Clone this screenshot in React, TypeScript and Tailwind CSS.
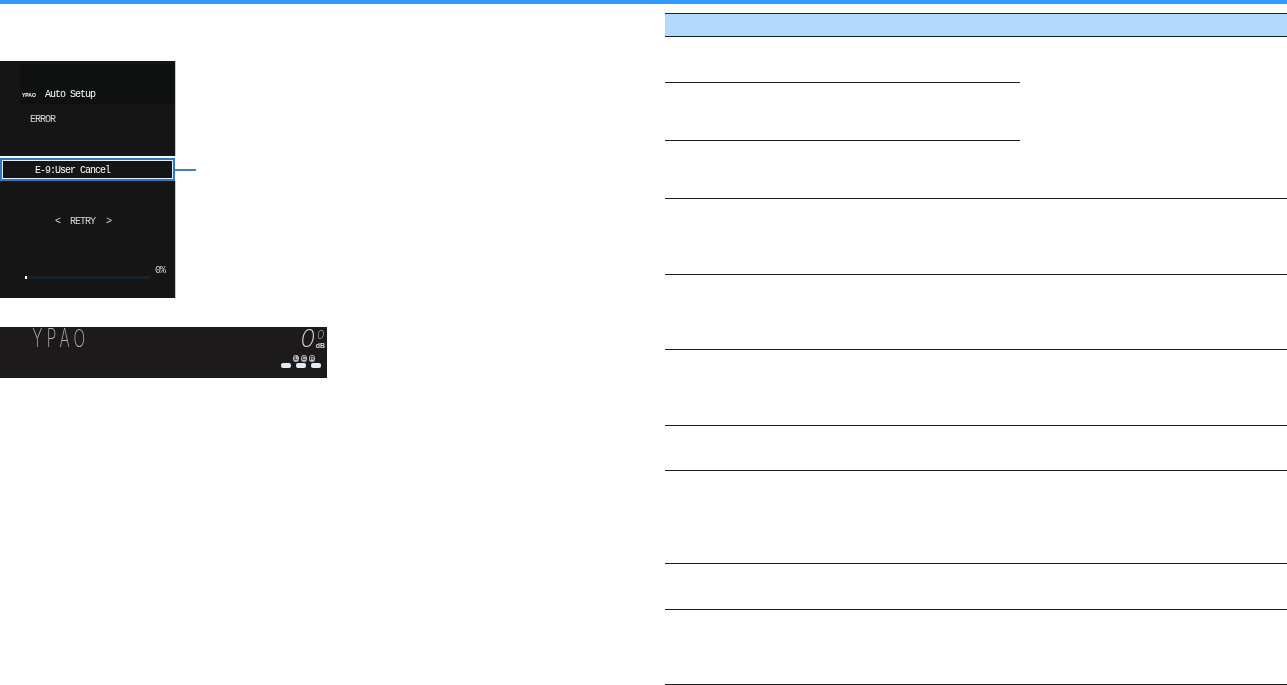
const sans = { fontFamily: '"Liberation Sans", sans-serif' };
const inter = { fontFamily: 'Inter, sans-serif' };

function Screen() {
  return (
    <div className="flex flex-col w-[199px] text-[10px] leading-[12px] tracking-[-1px] text-[#d4d4d4] [will-change:transform]">
      <div className="w-[176px] h-[95px] bg-[#151515] border-r border-[#c8c8c8] pt-[3px] flex flex-col">
        <div className="ml-[20px] h-[40px] bg-[#0f1110] flex items-end gap-[6px] pl-[2px] pb-[3px] text-white">
          <span className="w-[17px] text-[5px] font-bold tracking-normal" style={sans}>YPAO</span>
          <span>Auto Setup</span>
        </div>
        <div className="mt-[10px] ml-[30px]">ERROR</div>
      </div>
      <div className="flex items-center mt-[2px]">
        <div className="w-[175px] h-[23px] border-2 border-[#2f78c4] shrink-0">
          <div className="h-full border border-[#e8eef5] bg-[#151515] flex items-center pl-[32px] pt-[2px] text-white">E-9:User Cancel</div>
        </div>
        <div className="w-[21px] h-[2px] bg-[#3f7fc4]" />
      </div>
      <div className="w-[176px] h-[117px] bg-[#151515] border-r border-[#c8c8c8] pt-[35px] flex flex-col">
        <div className="flex pl-[55px]">
          <span className="w-[5px]">&lt;</span>
          <span className="ml-[10px] w-[25px]">RETRY</span>
          <span className="ml-[11px] w-[5px]">&gt;</span>
        </div>
        <div className="mt-[37px] pl-[155px]">0%</div>
        <div className="-mt-px ml-[25px] w-[125px] h-[3px] bg-[#15232f] flex">
          <div className="w-[2px] bg-white" />
        </div>
      </div>
    </div>
  );
}

function Display() {
  return (
    <div className="w-[327px] h-[51px] mt-[29px] bg-[#1c1a1b] flex justify-between [will-change:transform]">
      <div className="pl-[52px] text-[25px] leading-[23px] font-extralight tracking-[7px] text-[#b4b4b4] origin-left scale-x-[0.62] whitespace-nowrap" style={inter}>YPAO</div>
      <div className="flex flex-col items-end pr-[3px] pt-[2px]" style={sans}>
        <div className="flex h-[26px]">
          <span className="text-[24px] leading-[19px] font-extralight italic text-[#dcdcdc]" style={inter}>0</span>
          <div className="flex flex-col items-center ml-[2px] w-[7px]">
            <span className="text-[12px] leading-[12px] font-extralight italic text-[#c4c4c4]" style={inter}>0</span>
            <span className="mt-[2px] text-[7px] leading-[6px] font-bold text-[#d8d8d8]">dB</span>
          </div>
        </div>
        <div className="flex gap-[2px] mr-[9px]">
          {["L", "C", "R"].map((c) => (
            <div key={c} className="w-[6px] h-[7px] rounded-full bg-[#b4b4b4] text-[#222] text-[6px] leading-[7px] text-center font-bold">{c}</div>
          ))}
        </div>
        <div className="flex gap-[5px] mr-[3px] mt-[1px]">
          {[0, 1, 2].map((i) => (
            <div key={i} className="w-[10px] h-[5px] rounded-[2px] bg-[#e2ebf4]" />
          ))}
        </div>
      </div>
    </div>
  );
}

export default function App() {
  const rows = [
    { h: 46, short: true },
    { h: 58, short: true },
    { h: 58, short: false },
    { h: 76, short: false },
    { h: 75, short: false },
    { h: 76, short: false },
    { h: 45, short: false },
    { h: 93, short: false },
    { h: 46, short: false },
    { h: 75, short: false },
  ];
  return (
    <div className="w-[1287px] h-[685px] bg-white overflow-hidden" style={{ fontFamily: '"Liberation Mono", monospace' }}>
      <div className="h-[4px] bg-[#3399ff]" />
      <div className="flex">
        <div className="w-[665px] shrink-0 pt-[57px] flex flex-col">
          <Screen />
          <Display />
        </div>
        <div className="flex-1 pt-[9px]">
          <div className="h-[24px] bg-[#b3d9ff] border-y border-[#1f1f1f]" />
          {rows.map((r, i) => (
            <div key={i} style={{ height: r.h }} className="flex flex-col justify-end">
              <div className={r.short ? "h-px bg-[#1f1f1f] w-[355px]" : "h-px bg-[#1f1f1f]"} />
            </div>
          ))}
        </div>
      </div>
    </div>
  );
}
